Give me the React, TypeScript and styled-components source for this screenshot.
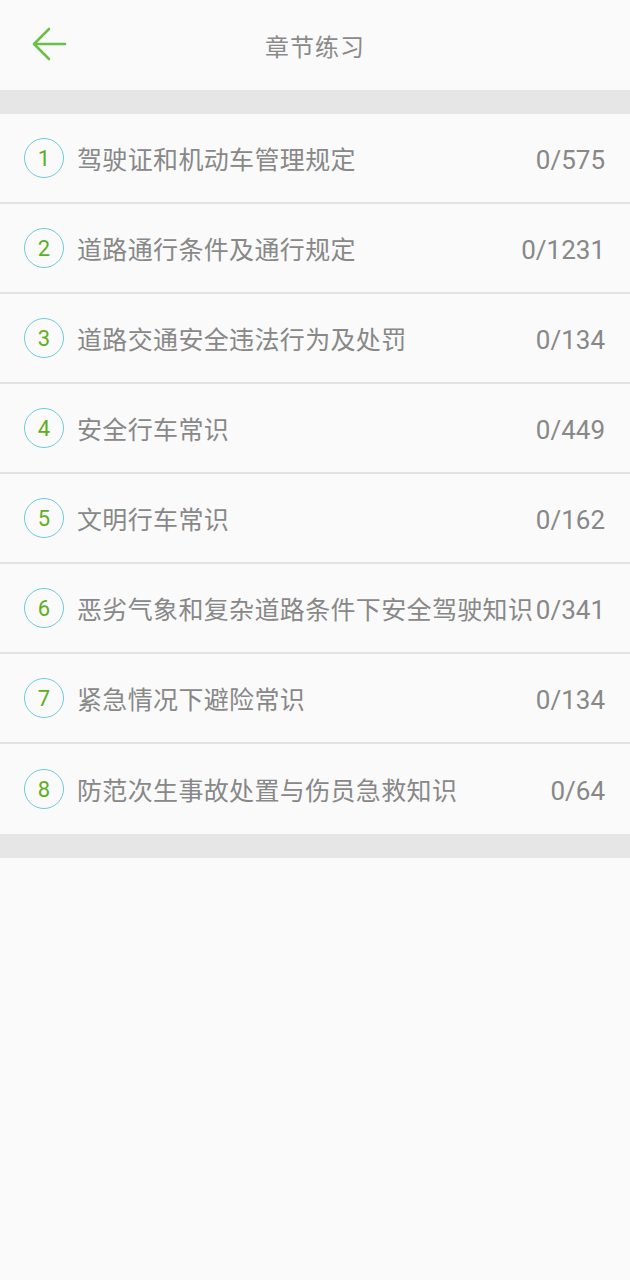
import { createGlobalStyle, styled } from 'styled-components';

const GlobalStyle = createGlobalStyle`
  html, body {
    margin: 0;
    padding: 0;
    background-color: #fafafa;
  }
  body {
    font-family: Roboto, "Noto Sans CJK SC", sans-serif;
  }
`;

const Page = styled.div`
  min-height: 1280px;
  background-color: #fafafa;
`;

const TopBar = styled.header`
  height: 90px;
  display: flex;
  align-items: center;
  justify-content: center;
  position: relative;
`;

const BackButton = styled.button`
  position: absolute;
  left: 30px;
  top: 27px;
  width: 38px;
  height: 36px;
  padding: 0;
  border: none;
  background: none;
  display: flex;
  align-items: center;
  justify-content: center;
`;

const Title = styled.h1`
  margin: 0;
  font-size: 24px;
  font-weight: 400;
  color: #8a8a8a;
  letter-spacing: 1px;
`;

const Divider = styled.div`
  height: 24px;
  background-color: #e6e6e6;
`;

const List = styled.ul`
  margin: 0;
  padding: 0;
  list-style: none;
`;

const Row = styled.li<{ $last?: boolean }>`
  height: 90px;
  box-sizing: border-box;
  display: flex;
  align-items: center;
  padding: 0 25px 0 24px;
  border-bottom: ${(p) => (p.$last ? 'none' : '2px solid #e2e2e2')};
`;

const Badge = styled.span`
  width: 38px;
  height: 38px;
  flex-shrink: 0;
  border: 1.5px solid #6ccbdc;
  border-radius: 50%;
  display: flex;
  align-items: center;
  justify-content: center;
  font-size: 22px;
  color: #5fae22;
  margin-right: 13px;
`;

const Name = styled.span`
  flex: 1;
  font-size: 25px;
  letter-spacing: 0.35px;
  color: #888;
  white-space: nowrap;
  overflow: hidden;
`;

const Count = styled.span`
  flex-shrink: 0;
  font-size: 26px;
  color: #888;
  padding-top: 3px;
`;

const chapters = [
  { name: '驾驶证和机动车管理规定', total: 575 },
  { name: '道路通行条件及通行规定', total: 1231 },
  { name: '道路交通安全违法行为及处罚', total: 134 },
  { name: '安全行车常识', total: 449 },
  { name: '文明行车常识', total: 162 },
  { name: '恶劣气象和复杂道路条件下安全驾驶知识', total: 341 },
  { name: '紧急情况下避险常识', total: 134 },
  { name: '防范次生事故处置与伤员急救知识', total: 64 },
];

export default function App() {
  return (
    <Page>
      <GlobalStyle />
      <TopBar>
        <BackButton aria-label="返回">
          <svg width="38" height="36" viewBox="0 0 38 36" fill="none">
            <path
              d="M4 17H35M19 2L4 17L19 32"
              stroke="#6cc04a"
              strokeWidth="2.6"
              strokeLinecap="round"
              strokeLinejoin="round"
            />
          </svg>
        </BackButton>
        <Title>章节练习</Title>
      </TopBar>
      <Divider />
      <List>
        {chapters.map((c, i) => (
          <Row key={c.name} $last={i === chapters.length - 1}>
            <Badge>{i + 1}</Badge>
            <Name>{c.name}</Name>
            <Count>0/{c.total}</Count>
          </Row>
        ))}
      </List>
      <Divider />
    </Page>
  );
}
